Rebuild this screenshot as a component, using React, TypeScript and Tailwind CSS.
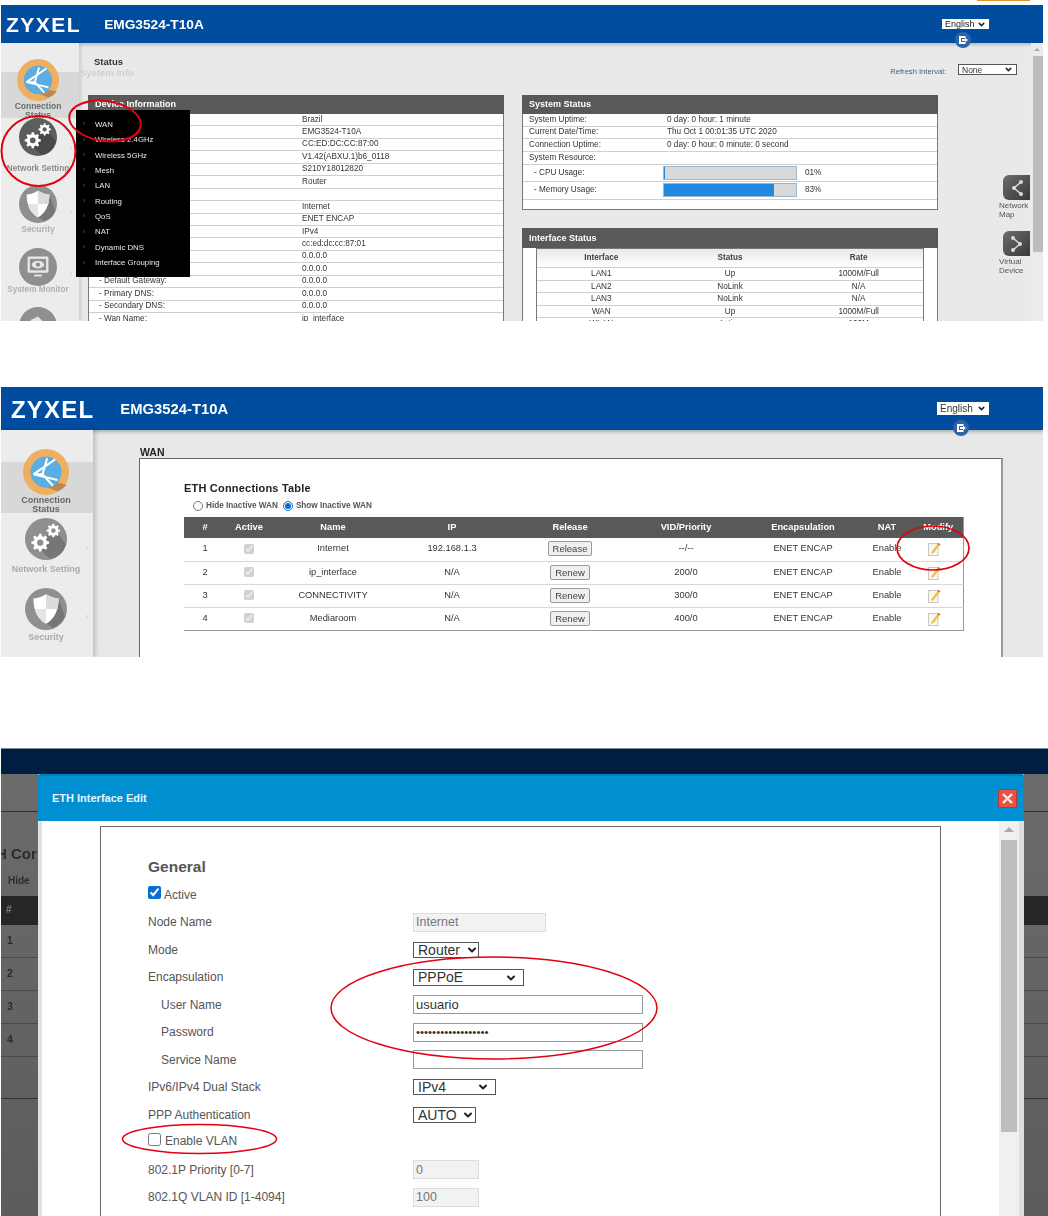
import React from 'react';
import { ChevronDown } from 'lucide-react';

// builds a toothed gear outline for the sidebar icon
const gearPath = (cx: number, cy: number, r: number, teeth: number) => {
  const pts: string[] = [];
  const step = (Math.PI * 2) / teeth;
  for (let i = 0; i < teeth; i++) {
    const a = i * step;
    [
      [a - step * 0.3, r * 0.76],
      [a - step * 0.17, r],
      [a + step * 0.17, r],
      [a + step * 0.3, r * 0.76],
    ].forEach(([t, d]) => {
      pts.push(`${(cx + Math.cos(t) * d).toFixed(2)} ${(cy + Math.sin(t) * d).toFixed(2)}`);
    });
  }
  return `M${pts.join('L')}Z`;
};

type IconKind = 'connection' | 'gears' | 'shield' | 'monitor' | 'tool';

const RoundIcon = ({ kind, size, dark }: { kind: IconKind; size: number; dark?: boolean }) => {
  const base = kind === 'connection' ? '#f0ae60' : dark ? '#5c5d5f' : '#8f8f8f';
  const shade = kind === 'connection' ? '#b98a55' : dark ? '#47484a' : '#767676';
  return (
    <svg width={size} height={size} viewBox="0 0 40 40" className="block">
      <circle cx="20" cy="20" r="20" fill={base} />
      {kind === 'connection' && (
        <>
          <path d="M29 29 L38 31 A20 20 0 0 1 30 37 L 13 30 Z" fill={shade} />
          <circle cx="20" cy="20" r="13.5" fill="#5aaee2" />
          <path d="M9 22 L28 9 M9 22 L30 27 M21 8 L17 22 L26 32 M9 22 L17 22" stroke="#fff" strokeWidth="1.8" fill="none" />
        </>
      )}
      {kind === 'gears' && (
        <>
          <path d="M28 10 L39 25 A20 20 0 0 1 24 39 L10 26 Z" fill={shade} />
          <path d={gearPath(14.5, 23.5, 8.5, 8)} fill="#fff" />
          <circle cx="14.5" cy="23.5" r="3" fill={base} />
          <path d={gearPath(27, 12, 6.5, 8)} fill="#fff" />
          <circle cx="27" cy="12" r="2.2" fill={base} />
        </>
      )}
      {kind === 'shield' && (
        <>
          <path d="M32 10 L38 27 A20 20 0 0 1 27 38 L14 30 Z" fill={shade} />
          <path d="M20 6 C25 9 29 10 32 10 C32 21 28 30 20 34 C12 30 8 21 8 10 C11 10 15 9 20 6 Z" fill="#fff" />
          <path d="M20 6 C25 9 29 10 32 10 C32 14 31.5 17 31 20 L20 20 Z" fill="#dcdcdc" />
          <path d="M20 20 L9.5 20 C11 26 15 31 20 34 Z" fill="#e4e4e4" />
        </>
      )}
      {kind === 'monitor' && (
        <>
          <rect x="9" y="9" width="22" height="17" rx="1.5" fill="#e6e6e6" />
          <rect x="11.5" y="11.5" width="17" height="12" fill={base} />
          <ellipse cx="20" cy="17.5" rx="6.5" ry="4" fill="#e6e6e6" />
          <circle cx="20" cy="17.5" r="2.2" fill={base} />
          <rect x="16" y="28" width="8" height="2" fill="#e6e6e6" />
        </>
      )}
      {kind === 'tool' && <path d="M12 14 L20 10 L30 20 L26 26 Z" fill="#e6e6e6" />}
    </svg>
  );
};

const LogoutBadge = () => (
  <svg width="16" height="16" viewBox="0 0 16 16" className="block">
    <circle cx="8" cy="8" r="8" fill="#2f63a8" />
    <path d="M4 4 H10.5 V6 H6 V10 H10.5 V12 H4 Z M7 7 H10 V5.8 L13 8 L10 10.2 V9 H7 Z" fill="#fff" />
  </svg>
);

const EditIcon = () => (
  <svg width="13" height="14" viewBox="0 0 13 14" className="block">
    <rect x="0.5" y="1.5" width="9.5" height="12" fill="#f8f8f2" stroke="#c9c9c2" />
    <path d="M3.5 10 L9.5 2 L11.5 3.4 L5.4 11.2 L3.2 11.8 Z" fill="#edc23c" />
    <path d="M9.5 2 L10.4 0.9 L12.3 2.2 L11.5 3.4 Z" fill="#c8562e" />
  </svg>
);

const Tile = ({ dir }: { dir: 'left' | 'right' }) => {
  const pts = dir === 'left' ? ['11,3', '4,9', '11,15'] : ['3,3', '10,9', '3,15'];
  const nodes = pts.map((p) => p.split(',').map(Number));
  return (
    <div className="w-[27px] h-[25px] rounded-l-[6px] bg-gradient-to-br from-[#6e6e6e] to-[#383838] flex items-center justify-center">
      <svg width="14" height="18" viewBox="0 0 14 18">
        <polyline points={pts.join(' ')} stroke="#cfcfcf" strokeWidth="1.6" fill="none" />
        {nodes.map(([x, y]) => (
          <circle key={`${x}-${y}`} cx={x} cy={y} r="2" fill="#dcdcdc" />
        ))}
      </svg>
    </div>
  );
};

// native select with the heavy chevron the router UI shows
const Dropdown = ({
  value,
  className,
  selectClass,
  chevron,
  chevronClass,
}: {
  value: string;
  className: string;
  selectClass: string;
  chevron: number;
  chevronClass: string;
}) => (
  <div className={`relative shrink-0 ${className}`}>
    <select defaultValue={value} className={`appearance-none block w-full h-full bg-white ${selectClass}`}>
      <option>{value}</option>
    </select>
    <ChevronDown size={chevron} strokeWidth={4} className={`absolute pointer-events-none text-[#222] ${chevronClass}`} />
  </div>
);

const deviceRows = [
  ['', 'Brazil'],
  ['', 'EMG3524-T10A'],
  ['', 'CC:ED:DC:CC:87:00'],
  ['', 'V1.42(ABXU.1)b6_0118'],
  ['', 'S210Y18012820'],
  ['', 'Router'],
  ['', ''],
  ['', 'Internet'],
  ['', 'ENET ENCAP'],
  ['', 'IPv4'],
  ['', 'cc:ed:dc:cc:87:01'],
  ['', '0.0.0.0'],
  ['', '0.0.0.0'],
  ['- Default Gateway:', '0.0.0.0'],
  ['- Primary DNS:', '0.0.0.0'],
  ['- Secondary DNS:', '0.0.0.0'],
  ['- Wan Name:', 'ip_interface'],
];

const menuItems = ['WAN', 'Wireless 2.4GHz', 'Wireless 5GHz', 'Mesh', 'LAN', 'Routing', 'QoS', 'NAT', 'Dynamic DNS', 'Interface Grouping'];

const ifaceRows = [
  ['LAN1', 'Up', '1000M/Full'],
  ['LAN2', 'NoLink', 'N/A'],
  ['LAN3', 'NoLink', 'N/A'],
  ['WAN', 'Up', '1000M/Full'],
  ['WLAN', 'Active', '100M'],
];

const wanRows = [
  ['1', 'Internet', '192.168.1.3', 'Release', '--/--'],
  ['2', 'ip_interface', 'N/A', 'Renew', '200/0'],
  ['3', 'CONNECTIVITY', 'N/A', 'Renew', '300/0'],
  ['4', 'Mediaroom', 'N/A', 'Renew', '400/0'],
];

const SideItem = ({
  kind,
  label,
  size,
  dark,
  className,
  textClass,
  arrow,
}: {
  kind: IconKind;
  label: string;
  size: number;
  dark?: boolean;
  className: string;
  textClass: string;
  arrow?: boolean;
}) => (
  <div className={`relative flex flex-col items-center ${className}`}>
    <RoundIcon kind={kind} size={size} dark={dark} />
    <div className={`text-center font-bold leading-[9px] ${textClass}`}>{label}</div>
    {arrow && <span className="absolute right-[3px] top-[45%] text-[7px] text-[#c4c4c4]">›</span>}
  </div>
);

const StatusRow = ({ label, value }: { label: string; value: string }) => (
  <div className="flex items-center border-b border-[#cfcfcf] text-[8.2px] text-[#333] h-[12.7px]">
    <div className="w-[144px] pl-[6px] shrink-0">{label}</div>
    <div>{value}</div>
  </div>
);

const UsageRow = ({ label, pct, h }: { label: string; pct: number; h: string }) => (
  <div className={`flex items-center border-b border-[#cfcfcf] text-[8.2px] text-[#333] ${h}`}>
    <div className="w-[140px] pl-[11px] shrink-0">{label}</div>
    <div className="w-[134px] h-[14px] bg-[#d9d9d9] border border-[#9fb6cf] shrink-0">
      <div className="h-full bg-[#1f8ae0]" style={{ width: `${pct}%` }} />
    </div>
    <div className="ml-[8px]">{String(pct).padStart(2, '0')}%</div>
  </div>
);

const FirstShot = () => (
  <section className="relative mt-[5px] ml-px w-[1042px] h-[316px] overflow-hidden bg-[#e9e9e9] blur-[0.3px]">
    <header className="h-[38px] bg-[#004c9f] flex items-start shadow-[0_2px_3px_rgba(0,0,0,0.2)]">
      <div className="ml-[5px] mt-[9px] text-[21px] leading-[22px] font-bold tracking-[1.5px] text-white">ZYXEL</div>
      <div className="ml-[23px] mt-[12px] text-[13.7px] leading-[16px] font-bold text-white">EMG3524-T10A</div>
      <div className="ml-auto mr-[54px] mt-[14px] flex flex-col items-center">
        <Dropdown
          value="English"
          className="w-[47px] h-[10px]"
          selectClass="pl-[3px] text-[9px] leading-[10px] text-[#222]"
          chevron={9}
          chevronClass="right-[3px] top-[1px]"
        />
        <div className="mt-[3px] -ml-[5px]"><LogoutBadge /></div>
      </div>
    </header>
    <div className="flex h-[278px]">
      <aside className="w-[78px] shrink-0 bg-[#ececec] shadow-[2px_0_3px_rgba(0,0,0,0.12)] relative pt-[16px]">
        <div className="absolute left-0 top-[29px] w-full h-[46px] bg-[#d8d8d8]" />
        <SideItem kind="connection" label="Connection Status" size={42} className="text-[8.5px] w-[74px]" textClass="text-[#6b6b6b] mt-[1px] relative" />
        <SideItem kind="gears" label="Network Setting" size={38} dark className="text-[8.2px] w-[74px] -mt-[2px]" textClass="text-[#8a8a8a] mt-[8px] whitespace-nowrap" arrow />
        <SideItem kind="shield" label="Security" size={38} className="text-[8.5px] w-[74px] mt-[12px]" textClass="text-[#b0b0b0] mt-[2px]" arrow />
        <SideItem kind="monitor" label="System Monitor" size={38} className="text-[8.2px] w-[74px] mt-[14px]" textClass="text-[#b0b0b0] -mt-[1px] whitespace-nowrap" arrow />
        <SideItem kind="tool" label="" size={38} className="w-[74px] mt-[13px]" textClass="" />
      </aside>
      <main className="flex-1 relative min-w-0">
        <div className="ml-[15px] mt-[13px] text-[9.5px] leading-[12px] font-bold text-[#333]">Status</div>
        <div className="ml-px text-[9.5px] leading-[10px] font-bold text-[#d0d0d0]">System Info</div>
        <div className="flex mt-[17px]">
          <div className="ml-[9px] w-[416px] shrink-0">
            <div className="h-[19px] bg-[#595959] pl-[7px] text-[9px] leading-[19px] font-bold text-white">Device Information</div>
            <div className="bg-white border-x border-[#777] h-[220px] overflow-hidden">
              {deviceRows.map(([label, value], i) => (
                <div key={i} className="flex items-center h-[12.45px] border-b border-[#cfcfcf] text-[8.2px] text-[#333]">
                  <div className="w-[213px] pl-[10px] shrink-0">{label}</div>
                  <div>{value}</div>
                </div>
              ))}
            </div>
          </div>
          <div className="ml-[18px] w-[416px] shrink-0">
            <div className="h-[19px] bg-[#595959] pl-[7px] text-[9px] leading-[19px] font-bold text-white">System Status</div>
            <div className="bg-white border-x border-b border-[#777] h-[96px]">
              <StatusRow label="System Uptime:" value="0 day: 0 hour: 1 minute" />
              <StatusRow label="Current Date/Time:" value="Thu Oct 1 00:01:35 UTC 2020" />
              <StatusRow label="Connection Uptime:" value="0 day: 0 hour: 0 minute: 0 second" />
              <StatusRow label="System Resource:" value="" />
              <UsageRow label="- CPU Usage:" pct={1} h="h-[17px]" />
              <UsageRow label="- Memory Usage:" pct={83} h="h-[18px]" />
            </div>
            <div className="mt-[18px] h-[20px] bg-[#595959] pl-[7px] text-[9px] leading-[20px] font-bold text-white">Interface Status</div>
            <div className="bg-white border-x border-[#777] h-[80px] pl-[13px] pr-[13px]">
              <div className="border-x border-t border-[#777]">
                <div className="grid grid-cols-3 h-[19px] items-center text-center text-[8.2px] font-bold text-[#444] bg-gradient-to-b from-[#e8e8e8] to-white border-b border-[#cfcfcf]">
                  <div>Interface</div>
                  <div>Status</div>
                  <div>Rate</div>
                </div>
                {ifaceRows.map((row) => (
                  <div key={row[0]} className="grid grid-cols-3 h-[12.6px] items-center text-center text-[8.2px] text-[#333] border-b border-[#cfcfcf]">
                    {row.map((c, i) => (
                      <div key={i}>{c}</div>
                    ))}
                  </div>
                ))}
              </div>
            </div>
          </div>
        </div>
        {/* dropdown flyout over the device table */}
        <nav className="absolute left-[-3px] top-[67px] w-[114px] h-[167px] bg-black pt-[7px] pl-[7px]">
          {menuItems.map((item) => (
            <div key={item} className="flex items-center h-[15.35px] text-[7.8px] text-[#e8e8e8]">
              <span className="w-[12px] text-[7px] text-[#666]">›</span>
              {item}
            </div>
          ))}
        </nav>
        <div className="absolute right-[26px] top-[21px] flex items-start text-[7.6px] text-[#3f5f7f]">
          <span className="mt-[2px]">Refresh Interval:</span>
          <Dropdown
            value="None"
            className="ml-[12px] w-[59px] h-[11px]"
            selectClass="border border-[#555] pl-[3px] text-[8.5px] leading-[8px] text-[#333]"
            chevron={9}
            chevronClass="right-[4px] top-[1px]"
          />
        </div>
        <div className="absolute right-[13px] top-[132px] w-[31px] flex flex-col items-end text-[8px] leading-[9px] text-[#555]">
          <Tile dir="left" />
          <div className="w-[31px] mt-[1px]">Network Map</div>
          <div className="mt-[12px]"><Tile dir="right" /></div>
          <div className="w-[31px] mt-[1px]">Virtual Device</div>
        </div>
        <div className="absolute right-0 top-0 w-[12px] h-full bg-[#ececec] flex flex-col items-end">
          <div className="mt-[5px] mr-[3px] w-0 h-0 border-x-[3px] border-x-transparent border-b-[3px] border-b-[#aaa]" />
          <div className="mt-[5px] w-[10px] h-[196px] bg-[#bdbdbd]" />
        </div>
      </main>
    </div>
  </section>
);

const SecondShot = () => (
  <section className="relative mt-[66px] ml-px w-[1042px] h-[270px] overflow-hidden bg-[#e8e8e8] blur-[0.4px]">
    <header className="h-[43px] bg-[#004c9f] flex items-start shadow-[0_2px_3px_rgba(0,0,0,0.25)]">
      <div className="ml-[10px] mt-[10px] text-[24px] leading-[25px] font-bold tracking-[1.2px] text-white">ZYXEL</div>
      <div className="ml-[26px] mt-[13px] text-[14.8px] leading-[18px] font-bold text-white">EMG3524-T10A</div>
      <div className="ml-auto mr-[54px] mt-[15px] flex flex-col items-center">
        <Dropdown
          value="English"
          className="w-[52px] h-[13px]"
          selectClass="pl-[3px] text-[10px] leading-[12px] text-[#333]"
          chevron={9}
          chevronClass="right-[3px] top-[2px]"
        />
        <div className="mt-[5px] -ml-[5px]"><LogoutBadge /></div>
      </div>
    </header>
    <div className="flex h-[227px]">
      <aside className="w-[92px] shrink-0 bg-[#ececec] shadow-[3px_0_4px_rgba(0,0,0,0.16)] relative pt-[19px]">
        <div className="absolute left-0 top-[32px] w-full h-[51px] bg-[#d8d8d8]" />
        <SideItem kind="connection" label="Connection Status" size={46} className="text-[9px] w-[90px]" textClass="text-[#666] mt-[1px] relative w-[60px]" />
        <SideItem kind="gears" label="Network Setting" size={42} className="text-[9px] w-[90px] mt-[4px]" textClass="text-[#aaa] mt-[5px] whitespace-nowrap" arrow />
        <SideItem kind="shield" label="Security" size={42} className="text-[9px] w-[90px] mt-[14px]" textClass="text-[#aaa] mt-[3px]" arrow />
      </aside>
      <main className="flex-1 min-w-0 pl-[47px] pt-[16px]">
        <div className="text-[10.5px] leading-[12px] font-bold text-[#222]">WAN</div>
        <div className="w-[864px] h-[210px] -ml-px bg-white border-t border-l border-[#666] border-r-2 border-r-[#999] pl-[44px] pt-[22px]">
          <div className="text-[11px] leading-[14px] font-bold tracking-[0.2px] text-[#222]">ETH Connections Table</div>
          <div className="flex items-center h-[16px] mt-[3px] ml-[9px] text-[8.2px] font-bold text-[#555]">
            <input type="radio" name="wan" readOnly className="w-[10px] h-[10px] mr-[3px]" />
            <span className="mr-[5px]">Hide Inactive WAN</span>
            <input type="radio" name="wan" defaultChecked className="w-[10px] h-[10px] mr-[3px] accent-[#0a6ed1]" />
            <span>Show Inactive WAN</span>
          </div>
          <table className="w-[779px] mt-[3px] table-fixed border-collapse text-center text-[9.3px] text-[#333] border-b border-r border-[#999]">
            <colgroup>
              <col className="w-[42px]" />
              <col className="w-[46px]" />
              <col className="w-[122px]" />
              <col className="w-[116px]" />
              <col className="w-[120px]" />
              <col className="w-[112px]" />
              <col className="w-[122px]" />
              <col className="w-[46px]" />
              <col className="w-[53px]" />
            </colgroup>
            <thead>
              <tr className="h-[21px] bg-[#595959] text-white font-bold">
                {['#', 'Active', 'Name', 'IP', 'Release', 'VID/Priority', 'Encapsulation', 'NAT', 'Modify'].map((h) => (
                  <th key={h} className={`font-bold p-0 whitespace-nowrap ${h === 'Modify' ? 'pl-[4px]' : ''}`}>{h}</th>
                ))}
              </tr>
            </thead>
            <tbody>
              {wanRows.map((r) => (
                <tr key={r[0]} className="h-[23px] border-t border-[#d8d8d8] first:border-t-0">
                  <td className="p-0">{r[0]}</td>
                  <td className="p-0">
                    <input type="checkbox" checked disabled readOnly className="w-[10px] h-[10px] align-middle" />
                  </td>
                  <td className="p-0">{r[1]}</td>
                  <td className="p-0">{r[2]}</td>
                  <td className="p-0">
                    <button className="h-[15px] px-[4px] bg-[#efefef] border border-[#999] rounded-[2px] text-[9.5px] leading-[13px] text-[#444]">{r[3]}</button>
                  </td>
                  <td className="p-0">{r[4]}</td>
                  <td className="p-0 whitespace-nowrap">ENET ENCAP</td>
                  <td className="p-0">Enable</td>
                  <td className="p-0">
                    <div className="ml-[18px]"><EditIcon /></div>
                  </td>
                </tr>
              ))}
            </tbody>
          </table>
        </div>
      </main>
    </div>
  </section>
);

const DimStrip = ({ width, withText }: { width: string; withText?: boolean }) => (
  <div className={`${width} shrink-0 bg-gradient-to-b from-[#6b6b6b] to-[#5c5c5c] overflow-hidden text-[#2b2b2b]`}>
    <div className="h-[38px] border-b border-[#333]" />
    <div className="h-[84px] relative">
      {withText && (
        <>
          <div className="absolute left-[-5px] top-[33px] whitespace-nowrap text-[15px] leading-[18px] font-bold">H Cor</div>
          <div className="absolute left-[7px] top-[63px] text-[10px] leading-[12px] font-bold">Hide</div>
        </>
      )}
    </div>
    <div className="h-[29px] bg-[#262626] pl-[5px] text-[10px] leading-[27px] font-bold text-[#777]">{withText ? '#' : ''}</div>
    {['1', '2', '3', '4'].map((n) => (
      <div key={n} className="h-[33px] border-b border-[#4a4a4a] pl-[6px] pt-[8px] text-[10.5px] leading-[14px] font-bold">
        {withText ? n : ''}
      </div>
    ))}
    <div className="h-[42px] border-b border-[#333]" />
  </div>
);

const FormRow = ({ label, indent, children }: { label: string; indent?: boolean; children?: React.ReactNode }) => (
  <div className="flex items-center h-[27.5px] text-[12px] text-[#555]">
    <div className={`w-[265px] shrink-0 ${indent ? 'pl-[13px]' : ''}`}>{label}</div>
    {children}
  </div>
);

const formSelect = 'border border-[#555] pl-[4px] text-[14px] leading-[14px] text-[#333]';

const ThirdShot = () => (
  <section className="mt-[91px] h-[468px] overflow-hidden flex flex-col blur-[0.4px]">
    <div className="h-[26px] shrink-0 bg-[#001d42] border-t border-[#7c8a99] ml-px" />
    <div className="flex flex-1 min-h-0 ml-px">
      <DimStrip width="w-[37px]" withText />
      <div className="w-[986px] shrink-0 flex flex-col rounded-t-[2px]">
        <div className="h-[47px] shrink-0 bg-[#0090d2] border-t-2 border-[#0080bd] flex items-center justify-between pl-[14px] pr-[7px] rounded-t-[2px]">
          <span className="text-[11px] font-bold text-[#e8f6fc]">ETH Interface Edit</span>
          <span className="w-[19px] h-[19px] rounded-[2px] bg-[#e8523f] border border-[#b23a32] flex items-center justify-center">
            <svg width="13" height="13" viewBox="0 0 13 13">
              <path d="M2 2 L11 11 M11 2 L2 11" stroke="#ffe9e4" strokeWidth="2.4" />
            </svg>
          </span>
        </div>
        <div className="flex-1 min-h-0 flex bg-white border-l-4 border-[#e2e2e2]">
          <div className="w-[957px] shrink-0 pl-[58px] pt-[5px]">
            <div className="w-[841px] h-[400px] border-t border-x border-[#666] pl-[47px] pt-[30px]">
              <div className="text-[15.5px] leading-[20px] font-bold text-[#555]">General</div>
              <div className="flex items-center h-[31.5px] text-[12px] text-[#555]">
                <input type="checkbox" defaultChecked className="w-[13px] h-[13px] mr-[3px] accent-[#0a6ed1]" />
                <span className="mt-[5px]">Active</span>
              </div>
              <FormRow label="Node Name">
                <input defaultValue="Internet" disabled className="w-[133px] h-[19px] px-[2px] bg-[#f2f2f2] border border-[#ddd] text-[12.5px] text-[#777]" />
              </FormRow>
              <FormRow label="Mode">
                <Dropdown value="Router" className="w-[66px] h-[16px]" selectClass={formSelect} chevron={12} chevronClass="right-[1px] top-[2px]" />
              </FormRow>
              <FormRow label="Encapsulation">
                <Dropdown value="PPPoE" className="w-[111px] h-[17px]" selectClass={formSelect} chevron={12} chevronClass="right-[7px] top-[3px]" />
              </FormRow>
              <FormRow label="User Name" indent>
                <input defaultValue="usuario" className="w-[230px] h-[19px] px-[2px] border-[1.5px] border-[#999] text-[13px] text-[#333]" />
              </FormRow>
              <FormRow label="Password" indent>
                <input type="password" defaultValue="aaaaaaaaaaaaaaaaaa" className="w-[230px] h-[19px] px-[2px] border-[1.5px] border-[#999] text-[11.5px] text-[#333]" />
              </FormRow>
              <FormRow label="Service Name" indent>
                <input className="w-[230px] h-[19px] border-[1.5px] border-[#999]" />
              </FormRow>
              <FormRow label="IPv6/IPv4 Dual Stack">
                <Dropdown value="IPv4" className="w-[83px] h-[16px]" selectClass={formSelect} chevron={12} chevronClass="right-[7px] top-[2px]" />
              </FormRow>
              <FormRow label="PPP Authentication">
                <Dropdown value="AUTO" className="w-[63px] h-[16px]" selectClass={formSelect} chevron={12} chevronClass="right-[2px] top-[2px]" />
              </FormRow>
              <div className="flex items-center h-[27.5px] text-[12px] text-[#555]">
                <input type="checkbox" className="w-[13px] h-[13px] mr-[4px] -mt-[6px]" />
                <span className="-mt-[2px]">Enable VLAN</span>
              </div>
              <FormRow label="802.1P Priority [0-7]">
                <input defaultValue="0" disabled className="w-[66px] h-[19px] px-[2px] bg-[#f2f2f2] border border-[#ddd] text-[12.5px] text-[#777]" />
              </FormRow>
              <FormRow label="802.1Q VLAN ID [1-4094]">
                <input defaultValue="100" disabled className="w-[66px] h-[19px] px-[2px] bg-[#f2f2f2] border border-[#ddd] text-[12.5px] text-[#777]" />
              </FormRow>
            </div>
          </div>
          <div className="w-[20px] shrink-0 bg-[#f0f0f0] flex flex-col items-center pt-[6px]">
            <div className="w-0 h-0 border-x-[5px] border-x-transparent border-b-[5px] border-b-[#aaa]" />
            <div className="mt-[8px] w-[16px] h-[292px] bg-[#bdbdbd]" />
          </div>
          <div className="flex-1 bg-[#dedede]" />
        </div>
      </div>
      <DimStrip width="flex-1" />
    </div>
  </section>
);

const App = () => (
  <div className="relative w-[1048px] h-[1216px] overflow-hidden bg-white font-['Liberation_Sans',Arial,sans-serif]">
    <div className="absolute left-[977px] top-0 w-[53px] h-[1px] bg-[#e0952f]" />
    <FirstShot />
    <SecondShot />
    <ThirdShot />
    {/* red annotation rings drawn over the screenshots */}
    <svg width="1048" height="1216" viewBox="0 0 1048 1216" className="absolute inset-0 pointer-events-none" fill="none" stroke="#e3000f">
      <ellipse cx="38.5" cy="151" rx="37" ry="35" strokeWidth="2" />
      <ellipse cx="105" cy="121" rx="36" ry="20" strokeWidth="2" transform="rotate(8 105 121)" />
      <ellipse cx="933" cy="548" rx="36" ry="22" strokeWidth="1.7" />
      <ellipse cx="494" cy="1008" rx="163" ry="51" strokeWidth="1.5" />
      <ellipse cx="199.5" cy="1139" rx="77" ry="14.5" strokeWidth="1.5" />
    </svg>
  </div>
);

export default App;
